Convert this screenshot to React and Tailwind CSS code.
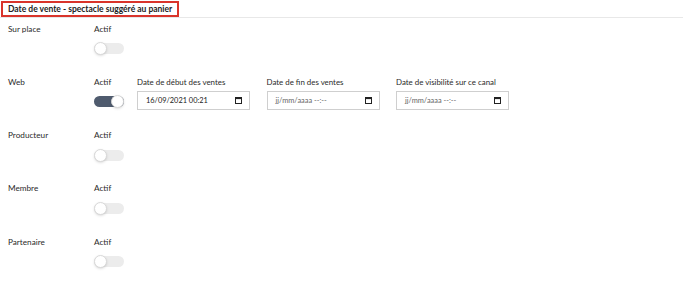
import React, { useState } from 'react';

const channels = [
    { name: 'Sur place', on: false },
    { name: 'Web', on: true, dates: true },
    { name: 'Producteur', on: false },
    { name: 'Membre', on: false },
    { name: 'Partenaire', on: false },
];

function Toggle({ on }) {
    return (
        <div className={`relative w-[30px] h-[11px] rounded-full ${on ? 'bg-[#4f5b6e]' : 'bg-[#ececec]'}`}>
            <div
                className={`absolute top-[-1px] w-[13px] h-[13px] rounded-full bg-white border border-[#d9d9d9] shadow-sm ${on ? 'left-[17px]' : 'left-0'}`}
            />
        </div>
    );
}

function CalendarIcon() {
    return (
        <svg width="7" height="7" viewBox="0 0 7 7" className="text-[#222]">
            <rect x="0.5" y="0.5" width="6" height="6" fill="none" stroke="currentColor" />
            <rect x="0.5" y="0.5" width="6" height="1.6" fill="currentColor" />
        </svg>
    );
}

function DateField({ label, value }) {
    return (
        <div className="w-[113px] flex flex-col">
            <label className="h-[11px] leading-[11px] text-[7.9px] text-[#2a2a2a] whitespace-nowrap">{label}</label>
            <div className="mt-[3.5px] h-[19px] border border-[#cfcfcf] flex items-center justify-between pl-[8px] pr-[7px]">
                <span className={`text-[7.4px] whitespace-nowrap ${value ? 'text-[#222]' : 'text-[#666]'}`}>{value || 'jj/mm/aaaa --:--'}</span>
                <CalendarIcon />
            </div>
        </div>
    );
}

export default function App() {
    const [items] = useState(channels);

    return (
        <div className="w-[688px] h-[284px] bg-white font-['Lato','Liberation_Sans',sans-serif] text-[#2a2a2a] leading-none">
            <div className="flex mr-[5px] border-b border-[#e8e8e8] pt-[1px]">
                <div className="flex items-center ml-[1px] border-2 border-[#d9342b] h-[16px] px-[5px] text-[8.5px] font-bold text-[#222]">
                    Date de vente - spectacle suggéré au panier
                </div>
            </div>

            <div className="pt-[5.5px]">
                {items.map((c) => (
                    <div key={c.name} className="h-[53.25px] flex pl-[8px]">
                        <div className="w-[86px] h-[11px] leading-[11px] text-[8.2px]">{c.name}</div>
                        <div className="w-[43px] flex flex-col">
                            <span className="h-[11px] leading-[11px] text-[8.2px]">Actif</span>
                            <div className="mt-[8.5px]">
                                <Toggle on={c.on} />
                            </div>
                        </div>
                        {c.dates && (
                            <div className="flex gap-[16.5px]">
                                <DateField label="Date de début des ventes" value="16/09/2021 00:21" />
                                <DateField label="Date de fin des ventes" />
                                <DateField label="Date de visibilité sur ce canal" />
                            </div>
                        )}
                    </div>
                ))}
            </div>
        </div>
    );
}
